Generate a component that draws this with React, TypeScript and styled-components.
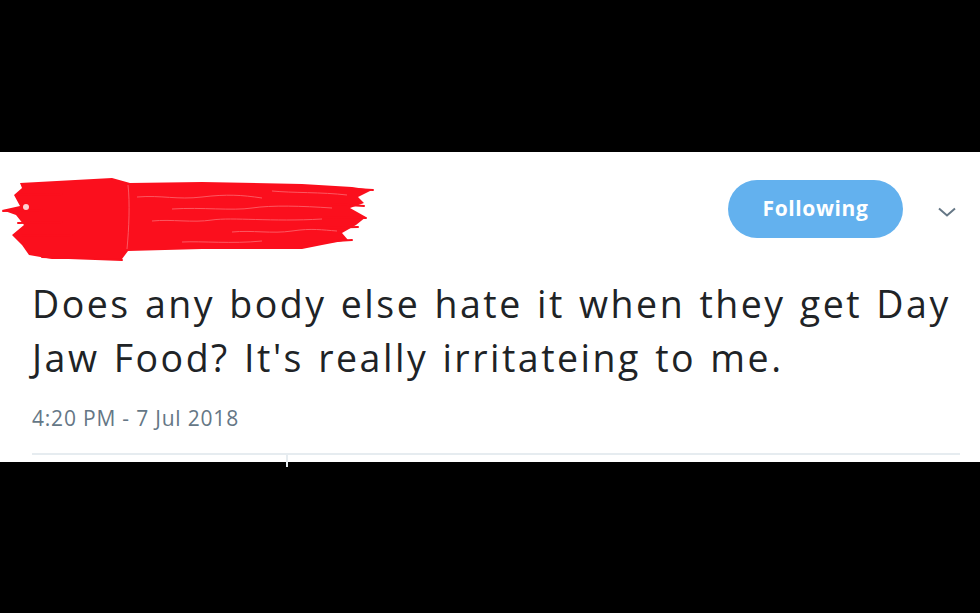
import React from 'react'
import styled, { createGlobalStyle } from 'styled-components'

const GlobalStyle = createGlobalStyle`
  html, body {
    margin: 0;
    padding: 0;
    background: #000;
  }
  body {
    font-family: 'Open Sans', 'Noto Sans', Arial, sans-serif;
  }
`

const Page = styled.div`
  width: 980px;
  height: 613px;
  background: #000;
  padding-top: 152px;
  box-sizing: border-box;
`

const Card = styled.div`
  background: #fff;
  height: 310px;
  display: flex;
  flex-direction: column;
`

const Header = styled.div`
  display: flex;
  align-items: flex-start;
  padding: 21px 23px 0 2px;
`

const Scribble = styled.svg`
  flex: none;
`

const Spacer = styled.div`
  flex: 1;
`

const FollowButton = styled.button`
  margin-top: 7px;
  width: 175px;
  height: 58px;
  border: 0;
  border-radius: 29px;
  background: #63b1ee;
  color: #fff;
  font-family: 'Open Sans', 'Noto Sans', Arial, sans-serif;
  font-weight: 700;
  font-size: 21px;
  letter-spacing: 0.6px;
  padding: 0 0 2px;
`

const Caret = styled.svg`
  margin: 34px 0 0 34px;
`

const Body = styled.div`
  padding: 0 20px 0 32px;
`

const TweetText = styled.p`
  margin: 16px 0 0;
  font-size: 37.5px;
  line-height: 54px;
  color: #202326;
  letter-spacing: 2.5px;
  word-spacing: 2px;
`

const Timestamp = styled.div`
  margin-top: 17px;
  font-size: 21px;
  line-height: 33px;
  color: #657786;
  letter-spacing: 0.8px;
`

const Stats = styled.div`
  margin-top: 18px;
  border-top: 2px solid #e6ecf0;
  display: flex;
  height: 12px;
`

const StatCell = styled.div<{ $w: number }>`
  width: ${(p) => p.$w}px;
  border-right: 2px solid #e6ecf0;
`

const Redaction = () => (
  <Scribble width="372" height="88" viewBox="0 0 372 88">
    <path
      fill="#fb0f1d"
      d="M18 10 L110 5 L128 10 L200 9 L300 11 L350 14 L370 17 L356 24 L362 30 L348 35 L364 44 L354 52 L340 60 L346 67 L320 72 L300 76 L200 76 L126 78 L120 86 L50 86 L27 82 L20 72 L10 62 L22 52 L14 42 L0 37 L18 33 L12 22 L20 15 Z"
    />
    <g stroke="#fb0f1d" strokeWidth="2" fill="none" strokeLinecap="round">
      <path d="M1 38 L40 37" />
      <path d="M14 22 L60 21" />
      <path d="M16 50 L60 49" />
      <path d="M18 63 L70 62" />
      <path d="M300 13 L371 17" />
      <path d="M330 31 L362 33" />
      <path d="M320 44 L364 45" />
      <path d="M310 55 L356 54" />
      <path d="M300 70 L350 67" />
      <path d="M40 84 L120 87" />
    </g>
    <g stroke="#fff" strokeWidth="1" fill="none" opacity="0.3">
      <path d="M135 24 C160 22 175 27 200 24 S240 22 260 25" />
      <path d="M170 36 C200 34 230 38 250 35 S300 33 330 35" />
      <path d="M150 48 C170 46 190 50 210 47 S270 49 320 46" />
      <path d="M230 59 C250 57 270 61 290 58 S320 57 335 58" />
      <path d="M180 69 C200 68 230 71 260 68" />
      <path d="M270 18 C290 20 320 19 345 22" />
      <path d="M126 12 C128 30 127 55 125 76" />
    </g>
    <circle cx="24" cy="34" r="3" fill="#fff" opacity="0.8" />
  </Scribble>
)

export default function App() {
  return (
    <>
      <GlobalStyle />
      <Page>
        <Card>
          <Header>
            <Redaction />
            <Spacer />
            <FollowButton>Following</FollowButton>
            <Caret width="20" height="10" viewBox="0 0 20 10">
              <path d="M2 1.5 L10 8.5 L18 1.5" stroke="#657786" strokeWidth="2" fill="none" />
            </Caret>
          </Header>
          <Body>
            <TweetText>
              Does any body else hate it when they get Day Jaw Food? It's really irritateing to me.
            </TweetText>
            <Timestamp>4:20 PM - 7 Jul 2018</Timestamp>
            <Stats>
              <StatCell $w={254} />
            </Stats>
          </Body>
        </Card>
      </Page>
    </>
  )
}
